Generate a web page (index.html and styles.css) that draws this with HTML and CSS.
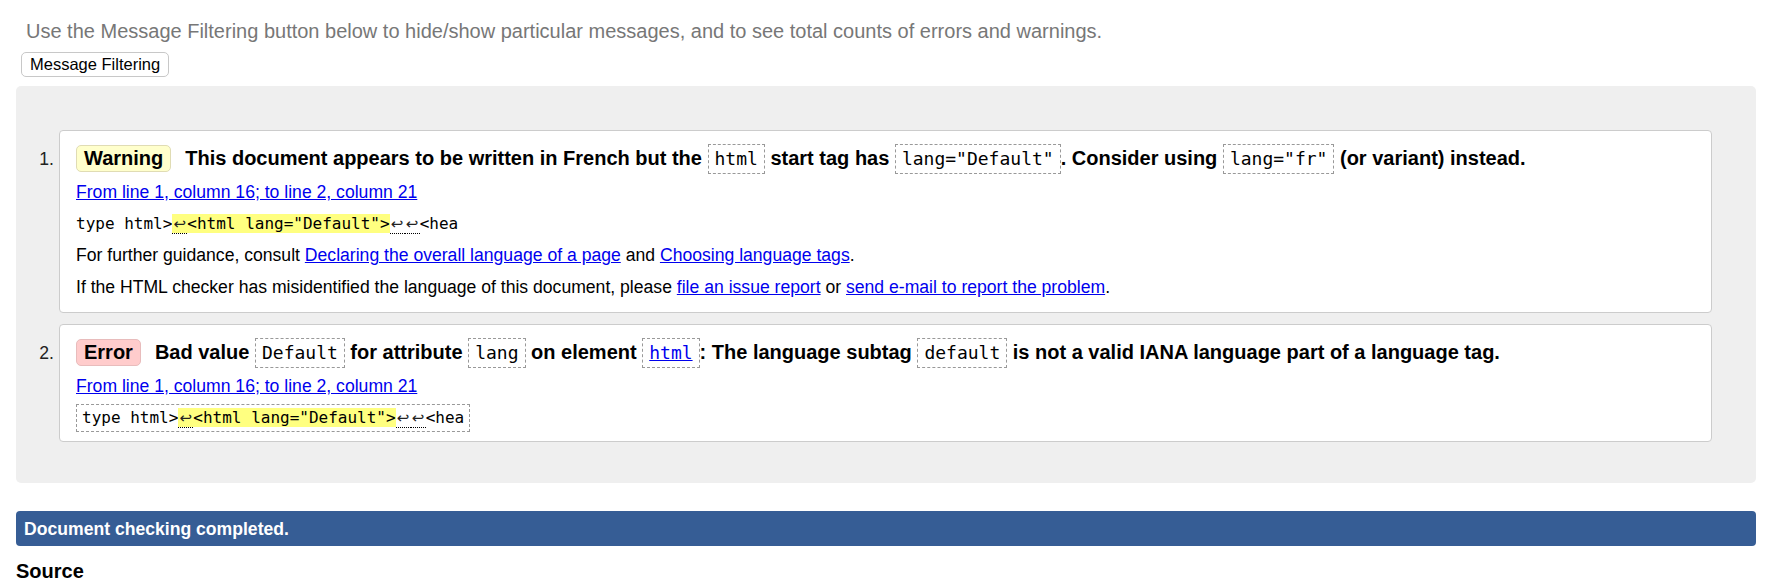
FILE: index.html
```html
<!DOCTYPE html>
<html lang="en">
<head>
<meta charset="utf-8">
<title>Nu Html Checker results</title>
<link rel="stylesheet" href="styles.css">
</head>
<body>
<p class="intro">Use the Message Filtering button below to hide/show particular messages, and to see total counts of errors and warnings.</p>
<div class="filter-row"><button class="filter-btn" type="button">Message Filtering</button></div>
<ol class="results">
  <li class="msg">
    <span class="num">1.</span>
    <div class="card">
      <p class="head"><strong class="badge warning">Warning</strong><span class="htext">This document appears to be written in French but the <code class="box">html</code> start tag has <code class="box">lang="Default"</code>. Consider using <code class="box">lang="fr"</code> (or variant) instead.</span></p>
      <p class="loc"><a href="#">From line 1, column 16; to line 2, column 21</a></p>
      <p class="extract"><code class="src">type html&gt;<mark class="hl"><b class="lf">↩</b>&lt;html lang="Default"&gt;</mark><b class="lf">↩</b><b class="lf">↩</b>&lt;hea</code></p>
      <p class="para">For further guidance, consult <a href="#">Declaring the overall language of a page</a> and <a href="#">Choosing language tags</a>.</p>
      <p class="para">If the HTML checker has misidentified the language of this document, please <a href="#">file an issue report</a> or <a href="#">send e-mail to report the problem</a>.</p>
    </div>
  </li>
  <li class="msg">
    <span class="num">2.</span>
    <div class="card compact">
      <p class="head"><strong class="badge error">Error</strong><span class="htext">Bad value <code class="box">Default</code> for attribute <code class="box">lang</code> on element <code class="box"><a href="#">html</a></code>: The language subtag <code class="box">default</code> is not a valid IANA language part of a language tag.</span></p>
      <p class="loc"><a href="#">From line 1, column 16; to line 2, column 21</a></p>
      <p class="extract extract-boxed"><code class="src boxed">type html&gt;<mark class="hl"><b class="lf">↩</b>&lt;html lang="Default"&gt;</mark><b class="lf">↩</b><b class="lf">↩</b>&lt;hea</code></p>
    </div>
  </li>
</ol>
<div class="status">Document checking completed.</div>
<h2 class="source">Source</h2>
</body>
</html>
```

FILE: styles.css
```css
html, body {
  background: #fff;
}

body {
  margin: 0;
  padding: 0 14px 0 16px;
  font-family: "Liberation Sans", Arial, sans-serif;
  font-size: 17.6px;
  line-height: 20px;
  color: #000;
}

a {
  color: #0000ee;
  text-decoration: underline;
}

.intro {
  margin: 0;
  padding: 20px 0 0 10px;
  font-size: 20px;
  line-height: 23px;
  color: #777;
}

.filter-row {
  display: flex;
  margin-top: 9px;
  padding-left: 5px;
}

.filter-btn {
  font-family: "Liberation Sans", Arial, sans-serif;
  font-size: 16.5px;
  line-height: 19px;
  padding: 2px 8px;
  border: 1px solid #c8c8c8;
  border-radius: 5px;
  background: #fff;
  color: #000;
}

.results {
  list-style: none;
  margin: 9px 0 0;
  padding: 44px 44px 41px 0;
  background: #efefef;
  border-radius: 5px;
  display: flex;
  flex-direction: column;
  gap: 11px;
}

.msg {
  display: flex;
  align-items: baseline;
}

.num {
  flex: none;
  width: 43px;
  box-sizing: border-box;
  padding-right: 5px;
  text-align: right;
  color: #222;
}

.card {
  flex: 1;
  min-width: 0;
  background: #fff;
  border: 1px solid #ccc;
  border-radius: 4px;
  padding: 12px 16px 15px;
}

.card.compact {
  padding-bottom: 9px;
}

.head {
  display: flex;
  align-items: baseline;
  gap: 14px;
  margin: 0;
}

.badge {
  flex: none;
  font-size: 20px;
  line-height: 23px;
  font-weight: bold;
  padding: 1px 7px;
  border: 1px solid;
  border-radius: 5px;
}

.warning {
  background: #ffffcc;
  border-color: #e0dcb4;
}

.error {
  background: #ffcccc;
  border-color: #e8bcbc;
}

.htext {
  font-size: 20px;
  line-height: 30px;
  font-weight: bold;
}

.box {
  display: inline-block;
  font-family: "DejaVu Sans Mono", "Liberation Mono", monospace;
  font-size: 18px;
  line-height: 24px;
  font-weight: normal;
  padding: 2px 6px;
  border: 1px dashed #999;
}

.loc {
  margin: 8px 0 0;
}

.extract {
  margin: 11px 0 0;
}

.extract-boxed {
  display: flex;
  margin-top: 8px;
}

.src {
  font-family: "DejaVu Sans Mono", "Liberation Mono", monospace;
  font-size: 16px;
  line-height: 20px;
  color: #000;
}

.boxed {
  display: block;
  padding: 3px 5px;
  border: 1px dashed #999;
}

.hl {
  background: #ffff80;
  color: #000;
}

.lf {
  display: inline-block;
  width: 15px;
  text-align: center;
  font-family: "DejaVu Sans", sans-serif;
  font-size: 15px;
  font-weight: normal;
  line-height: 18px;
  color: #222;
  border-bottom: 1px dotted #000;
}

.para {
  margin: 11px 0 0;
}

.para + .para {
  margin-top: 12px;
}

.status {
  margin-top: 28px;
  height: 35px;
  box-sizing: border-box;
  display: flex;
  align-items: center;
  padding: 0 8px;
  background: #365d95;
  color: #fff;
  font-weight: bold;
  border-radius: 4px;
}

.source {
  margin: 14px 0 0;
  font-size: 20px;
  line-height: 23px;
  font-weight: bold;
}
```
